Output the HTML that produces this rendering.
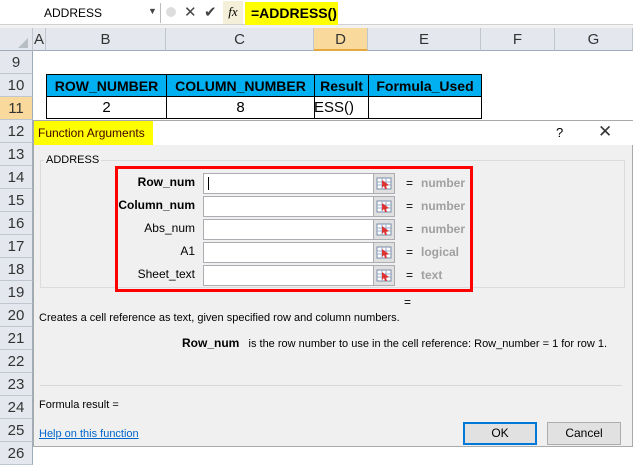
<!DOCTYPE html>
<html><head><style>
*{margin:0;padding:0;box-sizing:border-box}
body{width:633px;height:447px;overflow:hidden;background:#fff;font-family:"Liberation Sans",sans-serif;position:relative}
.a{position:absolute;white-space:nowrap}
.rh{position:absolute;left:0;width:33px;background:#e4e8ee;border-bottom:1px solid #c0c6ce;border-right:1px solid #9eabbb;font-size:15px;color:#333;text-align:center;height:23px;line-height:23px}
.ch{position:absolute;top:28px;height:23px;background:#e4e8ee;border-right:1px solid #c0c6ce;border-bottom:1px solid #9eabbb;font-size:15px;color:#333;text-align:center;line-height:23px}
.c{position:absolute;border:1px solid #000;text-align:center;font-size:15px;height:23px;line-height:22px;white-space:nowrap}
.inp{position:absolute;left:203px;width:192px;height:21px;border:1px solid #abadb3;background:#fff}
.ic{position:absolute;right:0;top:0;width:21px;height:19px;background:#e0e0e0;border-left:1px solid #abadb3}
.eq{position:absolute;left:406px;font-size:12px}
.ty{position:absolute;left:421px;font-size:12px;color:#a0a0a0;font-weight:bold}
</style></head><body>
<div class="a" style="left:0;top:0;width:633px;height:27px;background:#fff;border-bottom:1px solid #ccc"></div>
<div class="a" style="left:0;top:24px;width:633px;height:4px;background:#f2f2f2;border-top:1px solid #d0d0d0"></div>
<div class="a" style="left:44px;top:6px;font-size:12px">ADDRESS</div>
<div class="a" style="left:148px;top:6px;font-size:9px;color:#444">▼</div>
<div class="a" style="left:160px;top:3px;width:2px;height:20px;border-left:1px solid #bbb"></div>
<div class="a" style="left:166px;top:7px;width:10px;height:10px;border-radius:5px;background:#ddd"></div>
<div class="a" style="left:184px;top:3px;font-size:15px;color:#444">✕</div>
<div class="a" style="left:204px;top:3px;font-size:15px;color:#444">✔</div>
<div class="a" style="left:223px;top:1px;width:20px;height:23px;background:#f4efd8;font-family:'Liberation Serif';font-style:italic;font-size:13px;text-align:center;line-height:22px">fx</div>
<div class="a" style="left:245px;top:2px;width:93px;height:23px;background:#ffff00;font-size:14px;font-weight:bold;line-height:23px;padding-left:6px">=ADDRESS()</div>

<div class="ch" style="left:0;width:33px"></div>
<div class="a" style="left:18px;top:38px;width:0;height:0;border-left:10px solid transparent;border-bottom:10px solid #b8bec6"></div>
<div class="ch" style="left:33px;width:13px">A</div>
<div class="ch" style="left:46px;width:120px">B</div>
<div class="ch" style="left:166px;width:148px">C</div>
<div class="ch" style="left:314px;width:54px;background:#f9d99c;border-bottom:2px solid #e6a83c">D</div>
<div class="ch" style="left:368px;width:113px">E</div>
<div class="ch" style="left:481px;width:74px">F</div>
<div class="ch" style="left:555px;width:78px">G</div>

<div class="rh" style="top:51px">9</div>
<div class="rh" style="top:74px">10</div>
<div class="rh" style="top:97px;background:#f9d99c">11</div>
<div class="rh" style="top:120px">12</div>
<div class="rh" style="top:143px">13</div>
<div class="rh" style="top:166px">14</div>
<div class="rh" style="top:189px">15</div>
<div class="rh" style="top:212px">16</div>
<div class="rh" style="top:235px">17</div>
<div class="rh" style="top:258px">18</div>
<div class="rh" style="top:281px">19</div>
<div class="rh" style="top:304px">20</div>
<div class="rh" style="top:327px">21</div>
<div class="rh" style="top:350px">22</div>
<div class="rh" style="top:373px">23</div>
<div class="rh" style="top:396px">24</div>
<div class="rh" style="top:419px">25</div>
<div class="rh" style="top:442px">26</div>

<div class="c" style="left:46px;top:74px;width:121px;background:#00b0f0;font-weight:bold;font-size:14px">ROW_NUMBER</div>
<div class="c" style="left:166px;top:74px;width:149px;background:#00b0f0;font-weight:bold;font-size:14px">COLUMN_NUMBER</div>
<div class="c" style="left:314px;top:74px;width:55px;background:#00b0f0;font-weight:bold;font-size:14px">Result</div>
<div class="c" style="left:368px;top:74px;width:114px;background:#00b0f0;font-weight:bold;font-size:14px">Formula_Used</div>
<div class="c" style="left:46px;top:96px;width:121px">2</div>
<div class="c" style="left:166px;top:96px;width:149px">8</div>
<div class="c" style="left:314px;top:96px;width:55px;text-align:left;overflow:hidden"><span style="margin-left:-1px">ESS()</span></div>
<div class="c" style="left:368px;top:96px;width:114px"></div>

<div class="a" style="left:33px;top:120px;width:600px;height:327px;background:#f0f0f0;border:1px solid #aaa">
<div class="a" style="left:0;top:0;width:600px;height:24px;background:#fff"></div>
<div class="a" style="left:0;top:0;width:119px;height:24px;background:#ffff00;font-size:12px;color:#400;line-height:24px;padding-left:4px">Function Arguments</div>
<div class="a" style="left:522px;top:4px;font-size:13px">?</div>
<div class="a" style="left:564px;top:1px;font-size:17px;color:#333">✕</div>
</div>
<div class="a" style="left:40px;top:160px;width:585px;height:128px;border:1px solid #dcdcdc"></div>
<div class="a" style="left:44px;top:154px;font-size:11px;background:#f0f0f0;padding:0 2px">ADDRESS</div>
<div class="a" style="left:115px;top:166px;width:358px;height:126px;border:3px solid #ff0000"></div>

<div class="a" style="left:85px;top:175px;width:110px;font-size:12px;text-align:right;font-weight:bold">Row_num</div>
<div class="a" style="left:85px;top:198px;width:110px;font-size:12px;text-align:right;font-weight:bold">Column_num</div>
<div class="a" style="left:85px;top:221px;width:110px;font-size:12px;text-align:right">Abs_num</div>
<div class="a" style="left:85px;top:244px;width:110px;font-size:12px;text-align:right">A1</div>
<div class="a" style="left:85px;top:267px;width:110px;font-size:12px;text-align:right">Sheet_text</div>

<div class="inp" style="top:173px"><div class="a" style="left:4px;top:3px;width:1px;height:13px;background:#000"></div><div class="ic"><svg width="20" height="19"><rect x="3" y="4" width="14" height="11" fill="#fff" stroke="#7a8ca8"/><path d="M3 8h14M3 11h14M8 4v11M12 4v11" stroke="#9aaccc"/><path d="M8 6l7 5-3 1 1 3-2 0-1-3-2 2z" fill="#d33"/></svg></div></div>
<div class="inp" style="top:196px"><div class="ic"><svg width="20" height="19"><rect x="3" y="4" width="14" height="11" fill="#fff" stroke="#7a8ca8"/><path d="M3 8h14M3 11h14M8 4v11M12 4v11" stroke="#9aaccc"/><path d="M8 6l7 5-3 1 1 3-2 0-1-3-2 2z" fill="#d33"/></svg></div></div>
<div class="inp" style="top:219px"><div class="ic"><svg width="20" height="19"><rect x="3" y="4" width="14" height="11" fill="#fff" stroke="#7a8ca8"/><path d="M3 8h14M3 11h14M8 4v11M12 4v11" stroke="#9aaccc"/><path d="M8 6l7 5-3 1 1 3-2 0-1-3-2 2z" fill="#d33"/></svg></div></div>
<div class="inp" style="top:242px"><div class="ic"><svg width="20" height="19"><rect x="3" y="4" width="14" height="11" fill="#fff" stroke="#7a8ca8"/><path d="M3 8h14M3 11h14M8 4v11M12 4v11" stroke="#9aaccc"/><path d="M8 6l7 5-3 1 1 3-2 0-1-3-2 2z" fill="#d33"/></svg></div></div>
<div class="inp" style="top:265px"><div class="ic"><svg width="20" height="19"><rect x="3" y="4" width="14" height="11" fill="#fff" stroke="#7a8ca8"/><path d="M3 8h14M3 11h14M8 4v11M12 4v11" stroke="#9aaccc"/><path d="M8 6l7 5-3 1 1 3-2 0-1-3-2 2z" fill="#d33"/></svg></div></div>

<div class="eq" style="top:176px">=</div><div class="ty" style="top:176px">number</div>
<div class="eq" style="top:199px">=</div><div class="ty" style="top:199px">number</div>
<div class="eq" style="top:222px">=</div><div class="ty" style="top:222px">number</div>
<div class="eq" style="top:245px">=</div><div class="ty" style="top:245px">logical</div>
<div class="eq" style="top:268px">=</div><div class="ty" style="top:268px">text</div>

<div class="a" style="left:404px;top:295px;font-size:12px">=</div>
<div class="a" style="left:39px;top:312px;font-size:11px">Creates a cell reference as text, given specified row and column numbers.</div>
<div class="a" style="left:182px;top:336px;font-size:11px"><b style="font-size:12px">Row_num</b>&nbsp;&nbsp; is the row number to use in the cell reference: Row_number = 1 for row 1.</div>
<div class="a" style="left:40px;top:385px;width:582px;height:1px;background:#d8d8d8"></div>
<div class="a" style="left:39px;top:399px;font-size:11px">Formula result =</div>
<div class="a" style="left:39px;top:428px;font-size:11px;color:#0066cc;text-decoration:underline">Help on this function</div>
<div class="a" style="left:463px;top:422px;width:74px;height:23px;background:#e1e1e1;border:2px solid #0078d7;font-size:12px;text-align:center;line-height:19px">OK</div>
<div class="a" style="left:547px;top:422px;width:74px;height:23px;background:#e1e1e1;border:1px solid #adadad;font-size:12px;text-align:center;line-height:21px">Cancel</div>
</body></html>
